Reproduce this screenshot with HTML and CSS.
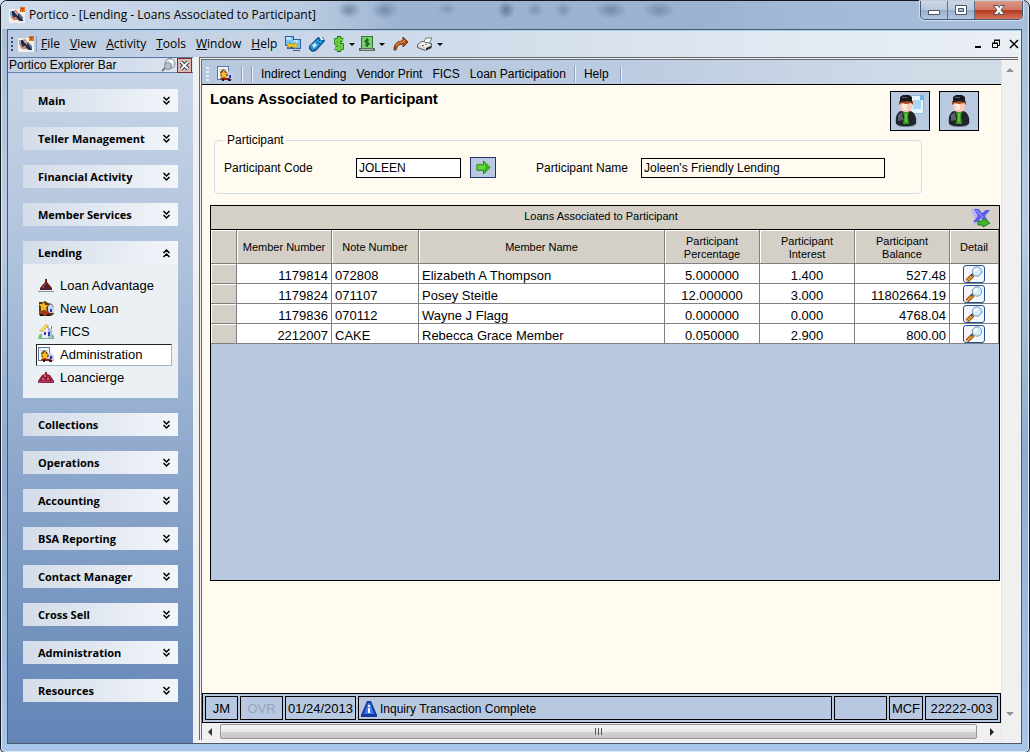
FILE: index.html
```html
<!DOCTYPE html>
<html lang="en">
<head>
<meta charset="utf-8">
<title>Portico - [Lending - Loans Associated to Participant]</title>
<link rel="stylesheet" href="styles.css">
</head>
<body>
<svg class="defs" aria-hidden="true">
  <symbol id="logo" viewBox="0 0 16 16">
    <path fill="#f1efec" d="M0 2h16v14H0z"/>
    <path fill="#9aa9c4" d="M1 4h2v5l2 3H3l-2-4z"/><path fill="#e07a50" d="M2 9h2l3 4H4zM5 3h2l3 4-1 1z"/>
    <path fill="#1f2c50" d="M3 4h2l2 3 2 1 1-2 2 4 2 3v1h-3l-2-1-2-3-2 1-2-3z"/><path fill="#6a7690" d="M10 6l4 4v3l-3-3z"/><path fill="#d9783a" d="M8 8h1v1H8zM6 11h2v2H6z"/>
    <path fill="#e8741c" d="M11 0h5v5h-5z"/><path fill="#b8440c" d="M12 1h3v1h-3zM13 1h1v3h-1z"/>
  </symbol>
  <symbol id="chev-down" viewBox="0 0 9 10"><path fill="none" stroke="#000" stroke-width="1.5" d="M1.500 1l3 3 3-3M1.500 5l3 3 3-3"/></symbol>
  <symbol id="chev-up" viewBox="0 0 9 10"><path fill="none" stroke="#000" stroke-width="1.5" d="M1.500 5l3-3 3 3M1.500 9l3-3 3 3"/></symbol>
  <symbol id="triangle" viewBox="0 0 16 16">
    <path fill="#8a9098" d="M0 13h16v1H0z"/><path fill="#6b1a16" d="M7 1h2v3l5 6v2H2v-2l5-6z"/>
    <path fill="#b04a30" d="M7 5h1l-2 5H4z"/><path fill="#1c2c50" d="M7 6h2v1H7zM6 8h4v1H6zM3 11h10v1H3z"/>
  </symbol>
  <symbol id="newloan" viewBox="0 0 16 16">
    <path fill="#5a3a10" d="M1 1h4l2-1 3 2 4 1 2 4v6l-3 2H2l-1-3z"/>
    <path fill="#c9d3f4" d="M10 5l3-2 3 4v5h-6z"/><path fill="#f4b41e" d="M1 3h3l2-2 1 3h3L8 7l1 3-3-1-3 1 0-4z"/>
    <path fill="#fdeb7a" d="M5 3l1 2h2L6 6z"/><path fill="#a93818" d="M1 10h9l2 2v2H1z"/>
    <path fill="#2438a8" d="M12 8h2v3h-2z"/><path fill="#1a1512" d="M2 13h3v2H2zM9 13h3v2H9z"/>
  </symbol>
  <symbol id="house" viewBox="0 0 16 16">
    <path fill="#74bd7b" d="M1 11l4-2h8l3 3v3H0z"/><path fill="#e9ecff" d="M4 7l5-5 5 5v7H4z"/>
    <path fill="#b0b9e6" d="M10 4l4 4v6h-4z"/><path fill="#d8aa20" d="M1 7l7-7 3 2-7 6z"/>
    <path fill="#f9e26c" d="M2 6l6-5 2 1-6 5z"/><path fill="#2b3fc0" d="M6 8h2v3H6zM10 8h2v4h-2z"/>
    <path fill="#777f92" d="M9 2l5 5v1L9 3zM13 2h1v3h-1z"/>
  </symbol>
  <symbol id="admin" viewBox="0 0 16 16">
    <path fill="#607893" d="M0 0h12v14H0z"/><path fill="#eef5fb" d="M1 1h10v12H1z"/><path fill="#b9d2e4" d="M2 3h8v1H2z"/>
    <path fill="#c5ccf0" d="M9 8l3-3 4 4v5H9z"/><path fill="#755018" d="M3 6l3-3 3 2 2 4-3 3H4z"/>
    <path fill="#f6bb2c" d="M3 7h2l2-3 1 3h2L9 9l1 3-3-1-3 1 1-3z"/><path fill="#8b2018" d="M3 12h9l3 2H4z"/>
    <path fill="#211b25" d="M5 13h2v2H5zM11 13h3v2h-3z"/><path fill="#2538a2" d="M12 9h2v3h-2z"/>
  </symbol>
  <symbol id="dome" viewBox="0 0 16 16">
    <path fill="#8d2040" d="M7 2h2v2l3 1 2 3 2 3v2H0v-2l2-3 2-3 3-1z"/><path fill="#dc6a50" d="M6 5h2v2H6zM4 8h2v2H4zM9 8h2v2H9z"/>
    <path fill="#a33a9a" d="M1 11h2v2H1zM13 11h2v2h-2zM6 10h2v1H6z"/><path fill="#c64038" d="M9 6h2v1H9zM3 11h9v1H3z"/>
  </symbol>
  <symbol id="person" viewBox="0 0 22 32">
    <ellipse cx="11" cy="30" rx="9" ry="2" fill="#7c8796"/>
    <path fill="#20242b" d="M1 29c-1-7 1-12 5-13h9c5 1 7 7 6 13-5 3-15 3-20 0z"/>
    <path fill="#59616a" d="M3 20l4-3 1 8-5 1z"/><path fill="#379d1c" d="M8 17h6l-1 4 1 8H8l1-8z"/><path fill="#63c43c" d="M10 18h2v9h-2z"/>
    <path fill="#f8cbb8" d="M5 8h12v5c0 3-3 4-6 4s-6-1-6-4z"/><path fill="#ffe9df" d="M7 9h5v6H8z"/>
    <path fill="#9a4b20" d="M4 6h14v4l-2-2-5 1-4-1-3 2z"/><path fill="#17191f" d="M5 2l3-2h6l3 2v5l-5-1-7 1z"/><path fill="#555d6b" d="M7 2h5v1H7z"/>
  </symbol>
  <symbol id="lens" viewBox="0 0 20 16">
    <path stroke="#895015" stroke-width="4" d="M3 15l6-6"/><path stroke="#f09a3b" stroke-width="2" d="M3 15l6-6"/>
    <path stroke="#555" stroke-width="2" d="M7 10l2-2"/>
    <circle cx="13" cy="5.500" r="4.700" fill="#d2edfd" stroke="#7897b5"/><path fill="#fff" d="M10 4l3-2 1 2-3 3z"/>
  </symbol>
</svg>

<div class="window">
  <header class="titlebar">
    <svg class="icon"><use href="#logo"/></svg>
    <h1>Portico - [Lending - Loans Associated to Participant]</h1>
    <div class="winbtns">
      <button aria-label="Minimize"><svg viewBox="0 0 14 12"><path fill="#fff" stroke="#4b5565" d="M1.500 6.500h11v4h-11z"/></svg></button>
      <button aria-label="Maximize"><svg viewBox="0 0 14 12"><path fill="#fff" fill-rule="evenodd" stroke="#4b5565" d="M1.500 1.500h11v9h-11zM4.500 4.500h5v3h-5z"/></svg></button>
      <button class="close" aria-label="Close"><svg viewBox="0 0 14 12"><path fill="#fff" stroke="#4b5565" d="M1.500 1.500h4L7 3.500l1.500-2h4L9 6l3.500 4.500h-4L7 8.500l-1.500 2h-4L5 6z"/></svg></button>
    </div>
  </header>

  <div class="client">
    <nav class="menubar">
      <span class="grip navy"></span>
      <svg class="icon"><use href="#logo"/></svg>
      <div class="menus">
        <button><u>F</u>ile</button><button><u>V</u>iew</button><button><u>A</u>ctivity</button><button><u>T</u>ools</button><button><u>W</u>indow</button><button><u>H</u>elp</button>
      </div>
      <div class="tools">
        <button aria-label="Connect"><svg class="icon" viewBox="0 0 16 16"><path fill="#2b5fa8" d="M0 0h9v10H0zM7 3h9v10H7z"/><path fill="#72c4f4" d="M1 1h7v8H1zM8 4h7v8H8z"/><path fill="#b8e4ff" d="M1 1h5v3H1zM9 4h4v3H9z"/><path fill="#355b8a" d="M2 11h5v2H2zM8 14h7v1H8z"/><path fill="#f2c51f" stroke="#94720b" stroke-width=".5" d="M2 9l3-3v2h5V6l3 3-3 4v-2H5v2z"/></svg></button>
        <button aria-label="Phone"><svg class="icon" viewBox="0 0 16 16"><path fill="#0f5391" d="M0 10l9-9 5 0 2 4-9 10-4 1-3-3z"/><path fill="#2a9bdd" d="M1 10l8-7 5 2-8 9-3 0z"/><path fill="#d7effd" d="M3 9l3-2 2 2-3 3zM10 1h3l2 3h-3z"/><path fill="#0c3a6a" d="M8 6h1v1H8zM10 7h1v1h-1zM10 4h1v1h-1zM5 13h1v1H5z"/><path fill="#f4c7dc" d="M4 9h2v2H4z"/></svg></button>
        <button class="drop" aria-label="Cash"><svg class="icon slim" viewBox="0 0 12 16"><path fill="none" stroke="#216c18" stroke-width="4" d="M10 4L7 3 3 4v3l6 2v3l-3 1-4-1M6 0v16"/><path fill="none" stroke="#70d140" stroke-width="2.500" d="M10 4L7 3 3 4v3l6 2v3l-3 1-4-1M6 1v14"/></svg></button>
        <button class="drop" aria-label="Register"><svg class="icon" viewBox="0 0 16 16"><path fill="#287a2d" d="M2 0h12v13H2z"/><path fill="#79cf69" d="M3 1h10v11H3z"/><path fill="none" stroke="#143e16" d="M10 4H7L6 5v1l4 1v1L9 9H6M8 2v9"/><path fill="#5c6d63" d="M0 12h16v3H0z"/><path fill="#a8b9ae" d="M2 13h12v1H2z"/></svg></button>
        <button aria-label="Forward"><svg class="icon" viewBox="0 0 16 16"><path fill="#b4500e" stroke="#712c08" d="M1 14c0-6 3-9 9-9V1l5 5-5 5V8c-4 0-6 2-7 6z"/><path fill="none" stroke="#f2a35d" d="M3 10c1-3 4-4 8-4V4"/></svg></button>
        <button class="drop" aria-label="Print"><svg class="icon" viewBox="0 0 16 16"><path fill="#fff" stroke="#777" d="M6 7l3-5h6l-3 6z"/><path fill="#d9dadb" stroke="#57595d" d="M0.500 8.500l4-3 10 2v4l-6 3-8-3z"/><path fill="#f7f7f7" d="M2 8l3-2 8 2-4 3z"/><path fill="#29292c" d="M9 12l5-2v2l-5 2z"/><path fill="#d22f20" d="M5 9h2v1H5z"/><path fill="#39a33a" d="M8 8h2v1H8z"/></svg></button>
      </div>
      <div class="mdi">
        <button aria-label="Minimize child"><svg viewBox="0 0 10 10"><path fill="#000" d="M2 7h6v2H2z"/></svg></button>
        <button aria-label="Restore child"><svg viewBox="0 0 10 10"><path fill="none" stroke="#000" d="M3.500 4V1.500h5v5H7M3 1h6M1.500 4.500h5v4h-5zM1 4h6"/></svg></button>
        <button aria-label="Close child"><svg viewBox="0 0 10 10"><path stroke="#000" stroke-width="1.500" d="M1 1l8 8M9 1l-8 8"/></svg></button>
      </div>
    </nav>

    <div class="workspace">
      <aside class="sidebar">
        <div class="panel-title">
          <h2>Portico Explorer Bar</h2>
          <button aria-label="Pin"><svg viewBox="0 0 15 14"><path stroke="#777c84" stroke-width="2" d="M1 13l4-4"/><circle cx="9" cy="5.500" r="5" fill="#e3e5e8" stroke="#80858d"/><circle cx="7" cy="8" r="3.500" fill="#b9bdc4" stroke="#8a8f96"/><path fill="#fff" d="M8 2h4v3H9z"/></svg></button>
          <button class="panel-close" aria-label="Close bar"><svg viewBox="0 0 12 12"><path stroke="#333b45" stroke-width="4" d="M2 2l8 8M10 2l-8 8"/><path stroke="#fff" stroke-width="2" d="M2 2l8 8M10 2l-8 8"/></svg></button>
        </div>
        <div class="groups">
          <button class="group">Main<svg><use href="#chev-down"/></svg></button>
          <button class="group">Teller Management<svg><use href="#chev-down"/></svg></button>
          <button class="group">Financial Activity<svg><use href="#chev-down"/></svg></button>
          <button class="group">Member Services<svg><use href="#chev-down"/></svg></button>
          <section>
            <button class="group">Lending<svg><use href="#chev-up"/></svg></button>
            <nav class="group-body">
              <a href="#"><svg class="icon"><use href="#triangle"/></svg>Loan Advantage</a>
              <a href="#"><svg class="icon"><use href="#newloan"/></svg>New Loan</a>
              <a href="#"><svg class="icon"><use href="#house"/></svg>FICS</a>
              <a href="#" class="selected"><svg class="icon"><use href="#admin"/></svg>Administration</a>
              <a href="#"><svg class="icon"><use href="#dome"/></svg>Loancierge</a>
            </nav>
          </section>
          <button class="group">Collections<svg><use href="#chev-down"/></svg></button>
          <button class="group">Operations<svg><use href="#chev-down"/></svg></button>
          <button class="group">Accounting<svg><use href="#chev-down"/></svg></button>
          <button class="group">BSA Reporting<svg><use href="#chev-down"/></svg></button>
          <button class="group">Contact Manager<svg><use href="#chev-down"/></svg></button>
          <button class="group">Cross Sell<svg><use href="#chev-down"/></svg></button>
          <button class="group">Administration<svg><use href="#chev-down"/></svg></button>
          <button class="group">Resources<svg><use href="#chev-down"/></svg></button>
        </div>
      </aside>

      <div class="document">
        <div class="doc-main">
          <nav class="toolbar">
            <span class="grip"></span>
            <button aria-label="Administration"><svg class="icon"><use href="#admin"/></svg></button>
            <span class="sep"></span><span class="sep"></span>
            <div class="links"><button>Indirect Lending</button><button>Vendor Print</button><button>FICS</button><button>Loan Participation</button></div>
            <span class="sep"></span><button>Help</button><span class="sep last"></span>
          </nav>
          <main class="content">
            <div class="page-head">
              <h2>Loans Associated to Participant</h2>
              <div class="people">
                <button aria-label="Member report"><svg viewBox="0 0 38 38"><path fill="#e6f6ff" stroke="#8dbbe0" d="M19.500 3.500h10l3 3v15h-13z"/><path fill="#a9d8f7" d="M22 8h8v9h-8z"/><path fill="#69b6ee" d="M29 3h4v5h-4z"/><use href="#person" x="4" y="3" width="22" height="32"/></svg></button>
                <button aria-label="Member"><svg viewBox="0 0 38 38"><use href="#person" x="8" y="3" width="22" height="32"/></svg></button>
              </div>
            </div>
            <fieldset>
              <legend>Participant</legend>
              <div class="fields">
                <label class="code-label" for="code">Participant Code</label>
                <input id="code" class="code" value="JOLEEN">
                <button class="go" aria-label="Go"><svg viewBox="0 0 16 16"><path fill="#5bdc2f" stroke="#267c1b" d="M1 5h7V1l7 7-7 7v-4H1z"/><path fill="#39a71f" d="M9 3l5 5-5 5V9h2z"/></svg></button>
                <label class="name-label" for="name">Participant Name</label>
                <input id="name" class="name" value="Joleen's Friendly Lending" readonly>
              </div>
            </fieldset>
            <section class="grid">
              <div class="grid-title">
                <h3>Loans Associated to Participant</h3>
                <button aria-label="Export"><svg viewBox="0 0 20 20"><path fill="#b7b4f2" d="M0 2l5-2 4 6 1 6-8 6 2-8z"/><path fill="#5b59ee" d="M3 1h5l3 4 4-3h4l-5 6 3 5h-4l-3-3-4 4H2l5-6z"/><path fill="#8583f5" d="M4 2h3l8 10h-2z"/><path fill="#42b728" stroke="#247c18" d="M7 13h5v-3l7 5-7 4v-2H7z"/></svg></button>
              </div>
              <table>
                <colgroup><col class="c-row"><col class="c-num"><col class="c-note"><col><col class="c-num"><col class="c-num"><col class="c-num"><col class="c-detail"></colgroup>
                <thead><tr><th></th><th>Member Number</th><th>Note Number</th><th>Member Name</th><th>Participant Percentage</th><th>Participant Interest</th><th>Participant Balance</th><th>Detail</th></tr></thead>
                <tbody>
                  <tr><th></th><td class="r">1179814</td><td>072808</td><td>Elizabeth A Thompson</td><td class="c">5.000000</td><td class="c">1.400</td><td class="r">527.48</td><td class="c"><button aria-label="Detail"><svg><use href="#lens"/></svg></button></td></tr>
                  <tr><th></th><td class="r">1179824</td><td>071107</td><td>Posey Steitle</td><td class="c">12.000000</td><td class="c">3.000</td><td class="r">11802664.19</td><td class="c"><button aria-label="Detail"><svg><use href="#lens"/></svg></button></td></tr>
                  <tr><th></th><td class="r">1179836</td><td>070112</td><td>Wayne J Flagg</td><td class="c">0.000000</td><td class="c">0.000</td><td class="r">4768.04</td><td class="c"><button aria-label="Detail"><svg><use href="#lens"/></svg></button></td></tr>
                  <tr><th></th><td class="r">2212007</td><td>CAKE</td><td>Rebecca Grace Member</td><td class="c">0.050000</td><td class="c">2.900</td><td class="r">800.00</td><td class="c"><button aria-label="Detail"><svg><use href="#lens"/></svg></button></td></tr>
                </tbody>
              </table>
            </section>
          </main>
          <footer class="status">
            <span class="s-user">JM</span><span class="s-ovr">OVR</span><span class="s-date">01/24/2013</span>
            <span class="s-msg"><svg class="icon" viewBox="0 0 16 16"><path fill="#173c9d" d="M6 0h4l6 14v2H0v-2z"/><path fill="#3f7cf3" d="M7 2h2l4 11H3z"/><path fill="#173c9d" d="M0 13h4v3H0zM12 13h4v3h-4z"/><path fill="#fff" d="M7 4h2v2H7zM7 7h2v5H7z"/></svg>Inquiry Transaction Complete</span>
            <span class="s-blank"></span><span class="s-mcf">MCF</span><span class="s-id">22222-003</span>
          </footer>
          <div class="hscroll">
            <svg viewBox="0 0 8 8"><path fill="#333" d="M6 0v8L2 4z"/></svg>
            <div class="thumb"><i></i><i></i><i></i></div>
            <svg viewBox="0 0 8 8"><path fill="#222" d="M2 0v8l4-4z"/></svg>
          </div>
        </div>
        <div class="vscroll">
          <svg viewBox="0 0 8 8"><path fill="#8d9299" d="M0 6h8L4 2z"/></svg>
          <svg viewBox="0 0 8 8"><path fill="#8d9299" d="M0 2h8L4 6z"/></svg>
        </div>
      </div>
    </div>
  </div>
</div>
</body>
</html>
```

FILE: styles.css
```css
* { box-sizing: border-box; }
body { margin: 0; font: 12px/16px "Liberation Sans", Arial, sans-serif; color: #000; background: #d8e0ea; }
button { margin: 0; padding: 0; border: 0; background: none; font: inherit; color: inherit; text-align: left; white-space: nowrap; }
h1, h2, h3 { margin: 0; font: inherit; }
svg { display: block; flex: none; }
.defs { position: absolute; width: 0; height: 0; }
.icon { width: 16px; height: 16px; }
.slim { width: 12px; }

.window {
  display: flex; flex-direction: column; min-height: 100vh; padding: 0 7px 8px 6px;
  border: 1px solid #15181d; border-radius: 7px 7px 5px 5px;
  background: linear-gradient(#a9bfd9 0, #a9bfd9 30px, #b9cce3 30%, #8fabcf 60%, #a9c6e8);
  box-shadow: inset 0 0 0 1px #dbe8f5;
}
.titlebar {
  display: flex; align-items: center; gap: 4px; height: 28px; margin: 0 -6px; padding: 0 5px 0 8px; border-radius: 6px 6px 0 0;
  background:
    radial-gradient(ellipse 12px 9px at 348px 9px, #4f678a99, transparent),
    radial-gradient(ellipse 14px 10px at 384px 9px, #4f678a88, transparent),
    radial-gradient(ellipse 10px 7px at 446px 8px, #4f678a55, transparent),
    radial-gradient(ellipse 9px 9px at 505px 9px, #3f587b99, transparent),
    radial-gradient(ellipse 9px 8px at 534px 9px, #4f678a66, transparent),
    radial-gradient(ellipse 9px 8px at 562px 9px, #4f678a66, transparent),
    radial-gradient(ellipse 16px 9px at 610px 9px, #4f678a88, transparent),
    radial-gradient(ellipse 16px 9px at 658px 9px, #4f678a77, transparent),
    linear-gradient(90deg, #cddbeb, #bccde2 300px, #9cb3d1 400px, #9bb3d1 700px, #a3bad7 800px, #a8bfdb);
}
.titlebar h1 { flex: 1; font: 12px/16px "Open Sans", sans-serif; }
.winbtns { display: flex; align-self: flex-start; border: 1px solid #485a74; border-top: 0; border-radius: 0 0 5px 5px; overflow: hidden; box-shadow: 0 0 1px 1px #d6e2f0; }
.winbtns button { display: grid; place-items: center; width: 27px; height: 18px; border-right: 1px solid #5c6f8b; background: linear-gradient(#ccd8e7, #b7c7dc 50%, #96adca 50%, #b3c7e0); }
.winbtns svg { width: 14px; height: 12px; }
.winbtns .close { width: 47px; border: 0; background: linear-gradient(#dc9a89, #ce7560 50%, #b2361c 50%, #d8745a); }

.client { display: flex; flex-direction: column; flex: 1; border: 1px solid #4c5969; background: #f0f0f0; }
.menubar { display: flex; align-items: center; height: 27px; padding: 0 2px 0 3px; border-top: 1px solid #a8d0f2; background: linear-gradient(90deg, #bacbe1, #e3eaf2 80%, #eaeff5); }
.grip { width: 3px; height: 14px; background: repeating-linear-gradient(#e8eef6 0 2px, transparent 2px 4px); }
.grip.navy { margin-right: 5px; width: 2px; background: repeating-linear-gradient(#2e4a86 0 2px, transparent 2px 4px); }
.menus { display: flex; gap: 10px; margin-left: 2px; padding-left: 4px; border-left: 1px solid #7f9dc4; font: 12px/16px "Open Sans", sans-serif; }
.tools { display: flex; gap: 8px; margin-left: 8px; }
.tools .drop { display: flex; align-items: center; gap: 4px; }
.drop::after { content: ""; border: 3px solid transparent; border-top-color: #000; border-bottom: 0; }
.tools .drop + .drop { margin-left: -4px; }
.mdi { display: flex; gap: 8px; margin-left: auto; }
.mdi svg { width: 10px; height: 10px; }

.workspace { display: flex; flex: 1; }
.sidebar { flex: none; width: 185px; background: linear-gradient(#c8d6e8, #b3c5de 26%, #98b0d1 50%, #6285b6); }
.panel-title { display: flex; align-items: center; gap: 1px; height: 16px; padding: 0 1px; border-top: 1px solid #5876a4; border-bottom: 1px solid #6284b5; background: linear-gradient(90deg, #c3d0e3, #dde5f0); }
.panel-title h2 { flex: 1; }
.panel-title svg { width: 15px; height: 14px; }
.panel-title .panel-close { width: 15px; height: 15px; padding: 1px; border: 1px solid #7c2d29; background: #dfb8b2; }
.panel-title .panel-close svg { width: 11px; height: 11px; }
.groups { display: flex; flex-direction: column; gap: 15px; padding: 16px 15px; }
.group { display: flex; align-items: center; justify-content: space-between; width: 100%; height: 23px; padding: 0 7px 0 15px; font: bold 11px/16px "Open Sans", sans-serif; background: linear-gradient(90deg, #d3dce8, #e2e8f1 50%, #f3f5fa); }
.group svg { width: 9px; height: 10px; }
.group-body { display: flex; flex-direction: column; gap: 1px; padding: 11px 6px 9px 13px; background: #ebf0f4; font-size: 13px; }
.group-body a { display: flex; align-items: center; gap: 6px; height: 22px; padding-left: 1px; border: 1px solid transparent; color: #000; text-decoration: none; }
.group-body .selected { border-color: #222 #9eb5d0 #9eb5d0 #222; background: #fff; }

.document { display: flex; flex: 1; min-width: 0; margin: 0 3px 3px 6px; border: 3px double #65696f; border-right: 0; border-bottom: 0; }
.doc-main { display: flex; flex-direction: column; flex: 1; min-width: 0; }
.toolbar { display: flex; align-items: center; gap: 8px; height: 25px; padding: 3px 4px 0; border-bottom: 1px solid #000; background: linear-gradient(90deg, #b8c8df, #bacae0 50%, #d0dbe8 90%); }
.links { display: flex; gap: 10px; }
.sep { width: 2px; height: 16px; border-left: 1px solid #8aa2c2; border-right: 1px solid #eef3f8; }
.toolbar .last { margin-left: 3px; }
.content { flex: 1; padding: 6px 1px 112px 8px; background: #fffbf0; }
.page-head { display: flex; justify-content: space-between; padding-right: 21px; }
.page-head h2 { font: bold 15px/16px "Liberation Sans", Arial, sans-serif; }
.people { display: flex; gap: 9px; }
.people button { width: 40px; height: 40px; border: 1px solid #000; background: #b9c9e0; }
.people svg { width: 38px; height: 38px; }
fieldset { max-width: 708px; margin: 2px 0 0 4px; padding: 10px 9px 15px; border: 1px solid #d0dcea; border-radius: 4px; }
legend { margin-left: -1px; padding: 0 2px 0 4px; line-height: 14px; }
.fields { display: flex; align-items: center; }
.fields input { height: 20px; padding: 0 2px; border: 1px solid #000; border-radius: 0; font: inherit; outline: 0; }
.code-label { width: 132px; }
.code { width: 105px; background: #fff; }
.go { display: grid; place-items: center; width: 26px; height: 21px; margin: 0 40px 0 9px; border: 1px solid #27336f; background: #b9c9e0; }
.go svg { width: 15px; height: 15px; }
.name-label { width: 105px; }
.name { width: 244px; background: #fffbf0; }

.grid { min-height: 50vh; margin-top: 11px; border: 1px solid #000; background: #b8c8e0; }
.grid-title { display: grid; grid-template-columns: 1fr auto 1fr; align-items: center; height: 24px; padding-right: 8px; border-bottom: 1px solid #000; background: #d4d0c8; }
.grid-title h3 { grid-column: 2; padding-bottom: 3px; font-size: 11px; line-height: 14px; }
.grid-title button { justify-self: end; }
.grid-title svg { width: 20px; height: 20px; }
table { width: 100%; table-layout: fixed; border-spacing: 0; font-size: 13px; }
.c-row { width: 26px; }
.c-num { width: 95px; }
.c-note { width: 87px; }
.c-detail { width: 49px; }
th, td { height: 20px; padding: 0 3px; border-right: 1px solid #808080; border-bottom: 1px solid #808080; white-space: nowrap; }
th { background: #d4d0c8; box-shadow: inset 1px 1px #fff; }
thead th { height: 34px; padding: 2px 4px 0; font: 11px/13px "Liberation Sans", Arial, sans-serif; white-space: normal; }
td { background: #fff; line-height: 15px; padding-top: 3px; }
td.r { text-align: right; }
td.c { text-align: center; }
td:last-child { padding: 0; }
td button { display: block; width: 22px; height: 18px; margin: 0 auto; border: 1px solid #205094; border-radius: 3px; background: #f4f6fb; }
td svg { width: 20px; height: 16px; }

.status { display: flex; gap: 2px; padding: 2px; border: 1px solid #000; background: #b8c8e0; font-size: 13px; }
.status span { display: flex; align-items: center; justify-content: center; height: 24px; padding-top: 2px; border: 1px solid #000; white-space: nowrap; }
.status .s-user { width: 33px; }
.status .s-ovr { width: 43px; color: #96a5b6; }
.status .s-date { width: 71px; }
.status .s-msg { flex: 1; justify-content: flex-start; gap: 3px; padding-left: 2px; font-size: 12px; }
.status .s-blank { width: 53px; }
.status .s-mcf { width: 34px; }
.status .s-id { width: 73px; }
.hscroll { display: flex; align-items: center; gap: 8px; height: 17px; padding: 0 5px 0 4px; background: #f0f0f0; }
.hscroll svg, .vscroll svg { width: 8px; height: 8px; }
.thumb { display: flex; flex: 1; align-items: center; justify-content: center; gap: 1px; height: 15px; margin: 0 3px 0 -2px; border: 1px solid #979797; border-radius: 2px; background: linear-gradient(#f5f5f5, #e9e9eb 50%, #d4d4d6 50%, #c6c6c8); }
.thumb i { width: 2px; height: 7px; border-left: 1px solid #555; }
.vscroll { display: flex; flex-direction: column; justify-content: space-between; align-items: center; width: 17px; padding: 6px 0 22px; border-left: 1px solid #dde6f2; background: #f0f0f0; }
```
